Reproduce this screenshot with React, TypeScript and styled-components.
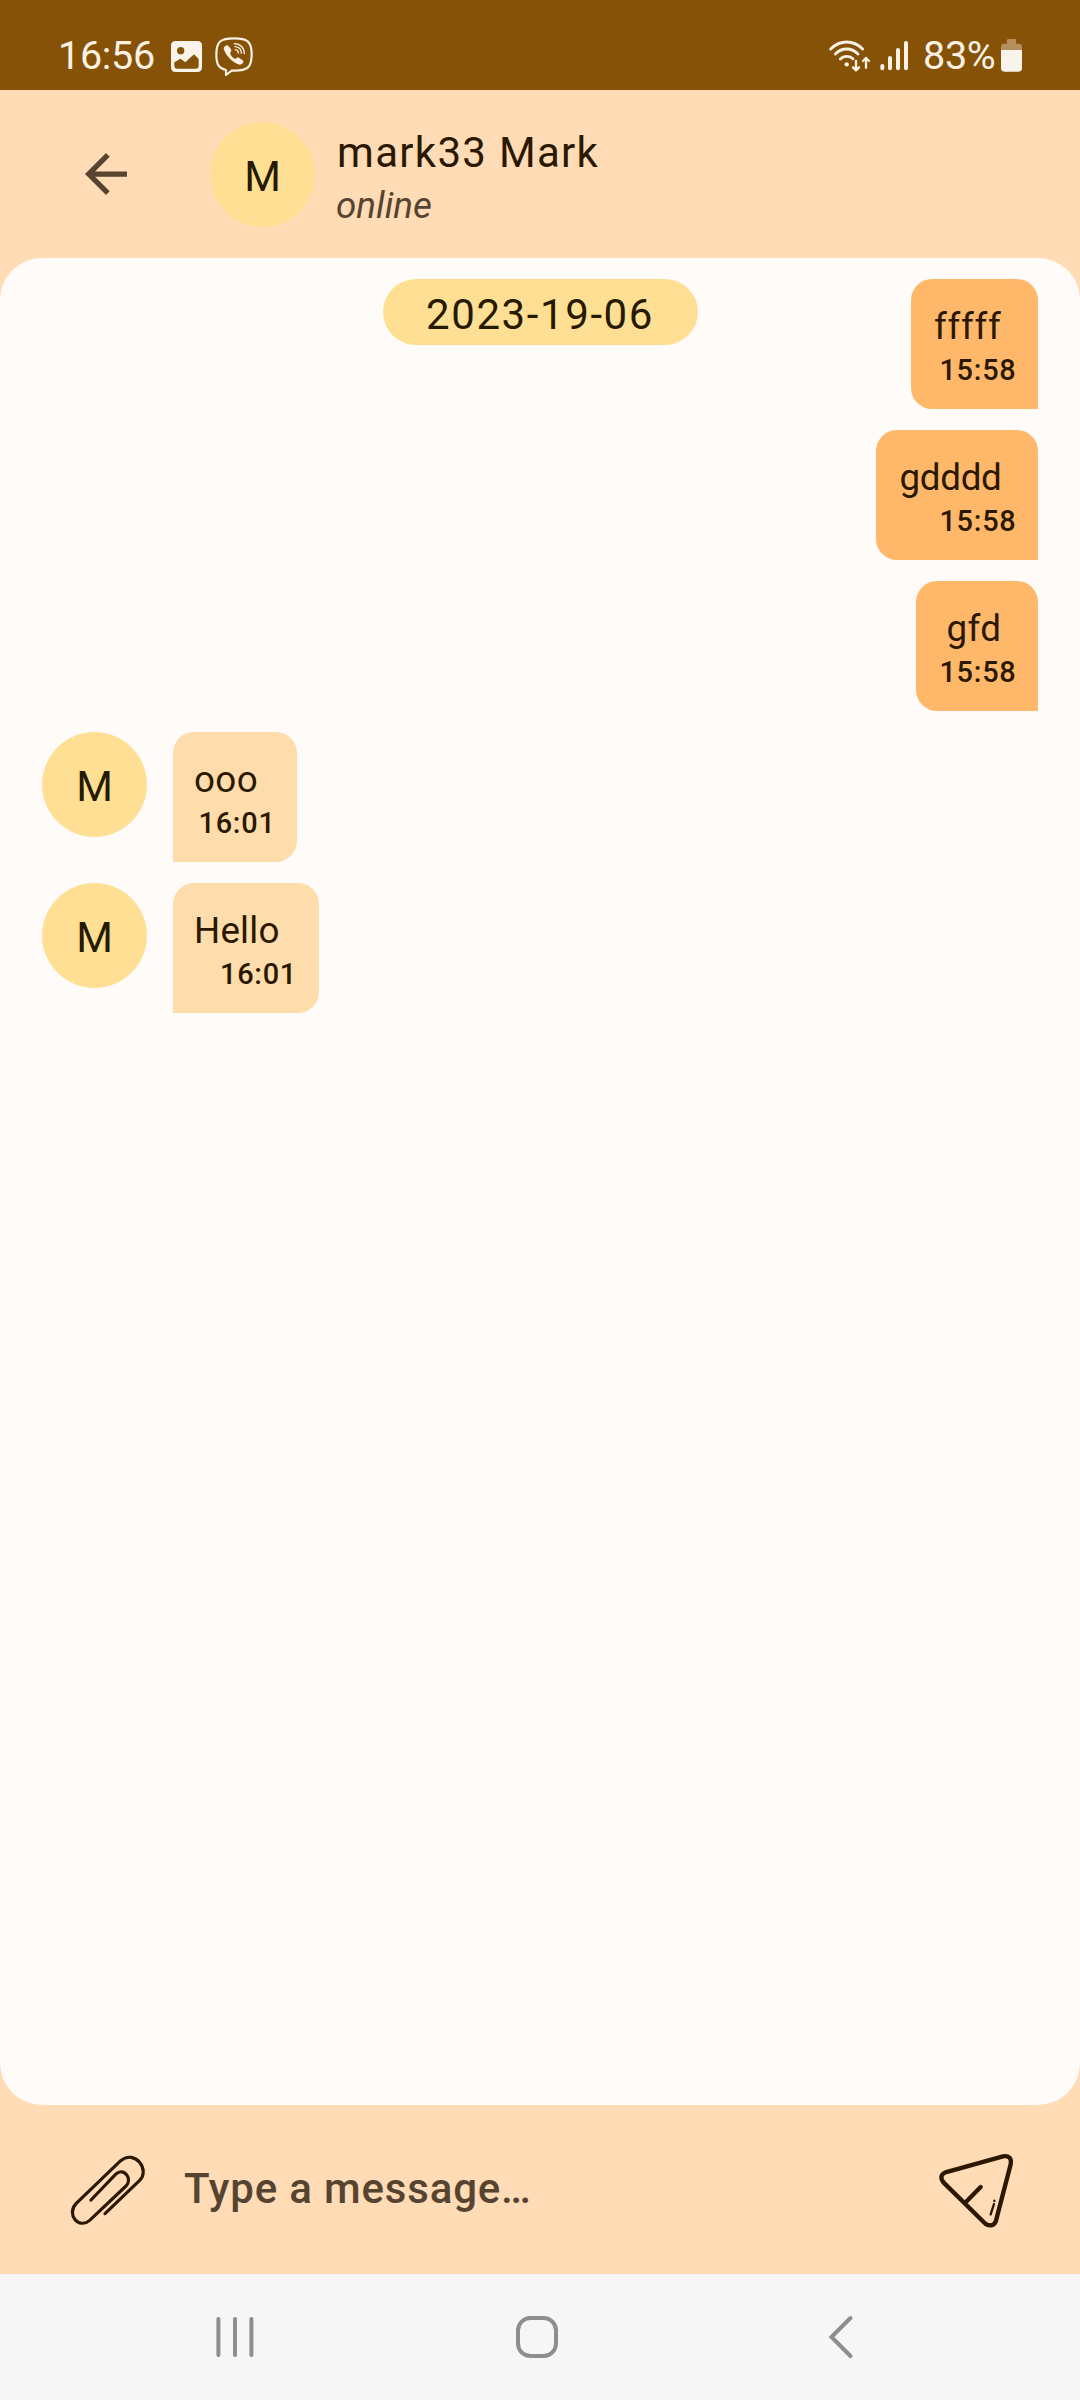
import React from 'react';
import styled, { createGlobalStyle } from 'styled-components';

const GlobalStyle = createGlobalStyle`
  *, *::before, *::after { box-sizing: border-box; }
  body { margin: 0; background: #ffdbb6; }
`;

const Screen = styled.div`
  width: 1080px;
  height: 2400px;
  display: flex;
  flex-direction: column;
  background: #ffdbb6;
  color: #2a1800;
  font-family: Roboto, 'Noto Sans', sans-serif;
  overflow: hidden;
`;

const StatusBar = styled.div`
  height: 90px;
  flex: none;
  display: flex;
  justify-content: space-between;
  background: #865207;
  color: #fbf1e4;
  padding: 32px 58px 0 58px;
`;

const StatusGroup = styled.div`
  display: flex;
  align-items: flex-start;
`;

const StatusText = styled.span<{ $width: number; $left?: number }>`
  width: ${p => p.$width}px;
  margin-left: ${p => p.$left ?? 0}px;
  font-size: 39.5px;
  line-height: 48px;
  letter-spacing: -0.3px;
  white-space: nowrap;
`;

const Glyph = styled.svg<{ $top?: number; $left?: number }>`
  display: block;
  flex: none;
  overflow: visible;
  margin-top: ${p => p.$top ?? 0}px;
  margin-left: ${p => p.$left ?? 0}px;
`;

const Header = styled.header`
  height: 168px;
  flex: none;
  display: flex;
  align-items: center;
  padding-left: 85px;
`;

const BackButton = styled.div`
  width: 125px;
  flex: none;
`;

const Avatar = styled.div`
  width: 105px;
  height: 105px;
  flex: none;
  border-radius: 50%;
  background: #ffdf94;
  color: #261a00;
  font-size: 42px;
  line-height: 110px;
  text-align: center;
`;

const Contact = styled.div`
  display: flex;
  flex-direction: column;
  margin-left: 21px;
  padding-top: 8px;
`;

const ContactName = styled.div`
  padding-left: 1px;
  font-size: 42px;
  line-height: 54px;
  letter-spacing: 1.3px;
`;

const Presence = styled.div`
  font-size: 36.75px;
  line-height: 51px;
  font-style: italic;
  color: #564431;
`;

const Sheet = styled.main`
  flex: 1;
  display: grid;
  grid-template-columns: 1fr;
  align-items: start;
  padding: 21px 42px;
  background: #fffbf8;
  border-radius: 42px;
`;

const DateChip = styled.div`
  grid-area: 1 / 1;
  justify-self: center;
  width: 315px;
  height: 66px;
  border-radius: 33px;
  background: #ffdf94;
  color: #261a00;
  font-size: 42px;
  line-height: 71px;
  letter-spacing: 1.6px;
  text-align: center;
`;

const Messages = styled.div`
  grid-area: 1 / 1;
  display: flex;
  flex-direction: column;
  gap: 21px;
`;

const MessageRow = styled.div<{ $own: boolean }>`
  display: flex;
  gap: 26px;
  justify-content: ${p => (p.$own ? 'flex-end' : 'flex-start')};
`;

const Bubble = styled.div<{ $own: boolean }>`
  height: 130px;
  display: flex;
  flex-direction: column;
  align-items: ${p => (p.$own ? 'flex-end' : 'flex-start')};
  padding: 22px 21px 20px;
  background: ${p => (p.$own ? '#ffb869' : '#ffdcab')};
  border-radius: ${p => (p.$own ? '21px 21px 0 21px' : '21px 21px 21px 0')};
`;

const MessageText = styled.div<{ $own: boolean; $tracking: number }>`
  padding-left: ${p => (p.$own ? 2.5 : 0)}px;
  padding-right: ${p => (p.$own ? 15.5 : 18)}px;
  font-size: 36.75px;
  line-height: 52.5px;
  letter-spacing: ${p => p.$tracking}px;
`;

const MessageTime = styled.div`
  align-self: flex-end;
  padding-left: 2px;
  padding-right: 0.5px;
  font-size: 28.9px;
  font-weight: 500;
  line-height: 33px;
  letter-spacing: 0.75px;
`;

const Composer = styled.footer`
  height: 169px;
  flex: none;
  display: flex;
  align-items: center;
  padding: 0 67px 0 71px;
`;

const Placeholder = styled.div`
  flex: 1;
  margin-left: 39px;
  padding-bottom: 3px;
  font-size: 42px;
  font-weight: 500;
  letter-spacing: 0.83px;
  color: #564431;
`;

const NavBar = styled.nav`
  height: 126px;
  flex: none;
  display: flex;
  padding-left: 84px;
  background: #f6f6f6;
`;

const NavButton = styled.div`
  width: 302px;
  display: flex;
  align-items: center;
  justify-content: center;
`;

const messages = [
  { own: true, text: 'fffff', time: '15:58', tracking: 0.7 },
  { own: true, text: 'gdddd', time: '15:58', tracking: -0.3 },
  { own: true, text: 'gfd', time: '15:58', tracking: 0.4 },
  { own: false, text: 'ooo', time: '16:01', tracking: 0.4 },
  { own: false, text: 'Hello', time: '16:01', tracking: 0.2 },
];

const PictureIcon = () => (
  <Glyph width="31" height="31" viewBox="0 0 93 93" $top={9}>
    <path
      fill="#f8f4ec"
      fillRule="evenodd"
      d="M14 0H79Q93 0 93 14V79Q93 93 79 93H14Q0 93 0 79V14Q0 0 14 0ZM29 18A11 11 0 1 0 29 40A11 11 0 1 0 29 18ZM10 64V74Q10 83 19 83H74Q83 83 83 74V54L69 40L43 64L29 53Z"
    />
  </Glyph>
);

const CallBubbleIcon = () => (
  <Glyph width="38" height="40" viewBox="0 0 114 120" fill="none" stroke="#fbf1e4" $top={5} $left={12.5}>
    <path
      strokeWidth="6.5"
      strokeLinejoin="round"
      d="M57 4C96 4 110 12 110 52C110 91 98 101 58 101H50L33 114V99C10 93 4 82 4 52C4 13 17 4 57 4Z"
    />
    <path
      fill="#fbf1e4"
      stroke="none"
      d="M30 28C33 24 38 24 41 28L48 37C50 41 49 44 45 48C47 57 54 64 62 66C66 61 69 61 73 63L83 70C86 73 86 76 83 79C78 84 74 84 68 81C50 73 34 56 27 38C25 34 27 31 30 28Z"
    />
    <path strokeWidth="4" strokeLinecap="round" d="M58 20C76 20 88 32 88 50M60 29C72 30 79 38 79 49M61 38C67 39 70 42 70 48" />
  </Glyph>
);

const WifiIcon = () => (
  <Glyph width="42" height="32" viewBox="0 0 126 96" fill="none" stroke="#fbf1e4" strokeWidth="8.5" strokeLinecap="round" $top={8}>
    <path d="M5 27Q26 6 53 6T101 27M19 42Q34 27 53 27T87 42M34 57Q42 49 54 49Q65 49 72 56" />
    <circle cx="53" cy="73" r="6.5" fill="#fbf1e4" stroke="none" />
    <path strokeWidth="7" strokeLinejoin="round" d="M81 63V90M72 82L81 91L90 82M111 83V54M102 63L111 54L120 63" />
  </Glyph>
);

const SignalIcon = () => (
  <Glyph width="28" height="30" viewBox="0 0 84 90" stroke="#fbf1e4" strokeWidth="12" strokeLinecap="round" $top={9} $left={9}>
    <path d="M7 75V82M30 51V82M54 27V82M78 6V82" />
  </Glyph>
);

const BatteryIcon = () => (
  <Glyph width="21" height="33" viewBox="0 0 63 99" $top={7} $left={7}>
    <path fill="#b68f5e" d="M18 4Q18 0 22 0H41Q45 0 45 4V14H53Q63 14 63 24V34H0V24Q0 14 10 14H18Z" />
    <path fill="#f8f4ec" d="M0 33H63V88Q63 98 53 98H10Q0 98 0 88Z" />
  </Glyph>
);

const BackArrowIcon = () => (
  <Glyph width="42" height="42" viewBox="4 4 16 16">
    <path fill="#564431" d="M20 11H7.83l5.59-5.59L12 4l-8 8 8 8 1.41-1.41L7.83 13H20v-2z" />
  </Glyph>
);

const PaperclipIcon = () => (
  <Glyph width="74" height="70" viewBox="213 285 222 210" fill="none" stroke="#2c1700" strokeWidth="9.5" strokeLinecap="round">
    <path d="M315 461L419 361C451 330 405 267 362 302L228 431C198 464 237 509 269 481L378 378C399 358 372 320 348 342L273 420" />
  </Glyph>
);

const SendIcon = () => (
  <Glyph width="74" height="74" viewBox="237 282 222 222" fill="none" stroke="#2c1700" strokeWidth="13" strokeLinecap="round" strokeLinejoin="round" $top={3}>
    <path d="M256 337L429 289Q457 285 452 313L408 482Q400 504 377 492L251 368Q235 347 256 337ZM317 427L362 381" />
    <path strokeWidth="7" d="M402 432L392 463M403 422V423" />
  </Glyph>
);

export default function App() {
  return (
    <>
      <GlobalStyle />
      <Screen>
        <StatusBar>
          <StatusGroup>
            <StatusText $width={113}>16:56</StatusText>
            <PictureIcon />
            <CallBubbleIcon />
          </StatusGroup>
          <StatusGroup>
            <WifiIcon />
            <SignalIcon />
            <StatusText $width={71} $left={15}>83%</StatusText>
            <BatteryIcon />
          </StatusGroup>
        </StatusBar>

        <Header>
          <BackButton>
            <BackArrowIcon />
          </BackButton>
          <Avatar>M</Avatar>
          <Contact>
            <ContactName>mark33 Mark</ContactName>
            <Presence>online</Presence>
          </Contact>
        </Header>

        <Sheet>
          <Messages>
            {messages.map((m, i) => (
              <MessageRow key={i} $own={m.own}>
                {!m.own && <Avatar>M</Avatar>}
                <Bubble $own={m.own}>
                  <MessageText $own={m.own} $tracking={m.tracking}>{m.text}</MessageText>
                  <MessageTime>{m.time}</MessageTime>
                </Bubble>
              </MessageRow>
            ))}
          </Messages>
          <DateChip>2023-19-06</DateChip>
        </Sheet>

        <Composer>
          <PaperclipIcon />
          <Placeholder>Type a message…</Placeholder>
          <SendIcon />
        </Composer>

        <NavBar>
          <NavButton>
            <Glyph width="38" height="40" viewBox="0 0 38 40" stroke="#8e8e8e" strokeWidth="4" strokeLinecap="round">
              <path d="M2.4 2V38M19 2V38M35.4 2V38" />
            </Glyph>
          </NavButton>
          <NavButton>
            <Glyph width="42" height="42" viewBox="0 0 42 42" fill="none" stroke="#8e8e8e" strokeWidth="4">
              <rect x="2" y="2" width="38" height="38" rx="12.5" />
            </Glyph>
          </NavButton>
          <NavButton>
            <Glyph width="24" height="42" viewBox="0 0 24 42" fill="none" stroke="#8e8e8e" strokeWidth="4" strokeLinecap="round" $left={3}>
              <path d="M21.5 2L2.5 21L21.5 40" />
            </Glyph>
          </NavButton>
        </NavBar>
      </Screen>
    </>
  );
}
